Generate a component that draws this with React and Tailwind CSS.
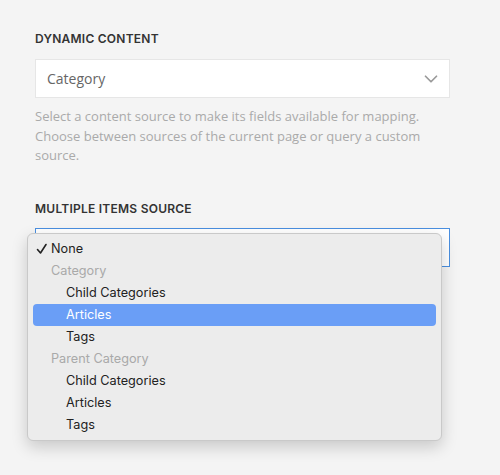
import { ChevronDown } from 'lucide-react';

const sources = [
  { label: 'None', checked: true },
  { label: 'Category', group: true },
  { label: 'Child Categories' },
  { label: 'Articles', active: true },
  { label: 'Tags' },
  { label: 'Parent Category', group: true },
  { label: 'Child Categories' },
  { label: 'Articles' },
  { label: 'Tags' },
];

function FieldLabel({ children }) {
  return (
    <div className="text-[12px] leading-4 font-semibold uppercase tracking-[0.02em] text-[#333] font-['Inter',sans-serif]">
      {children}
    </div>
  );
}

function SourceMenu() {
  return (
    <div className="absolute left-[-8px] top-[5px] w-[415px] rounded-[6px] border border-[#c9c9c9] bg-[#ececec] pt-[4px] pb-[4px] px-[5px] shadow-[0_6px_16px_rgba(0,0,0,0.18)] font-['Inter',sans-serif] text-[12.7px]">
      {sources.map((item, i) => {
        let cls = 'h-[22px] flex items-center rounded-[4px] ';
        if (item.active) cls += 'bg-[#6a9ef6] text-white pl-[33px]';
        else if (item.group) cls += 'text-[#a9a9a9] pl-[18px]';
        else if (item.checked) cls += 'text-[#222] pl-[3px]';
        else cls += 'text-[#222] pl-[33px]';
        return (
          <div key={i} className={cls}>
            {item.checked && (
              <svg width="15" height="12" viewBox="0 0 15 12" className="shrink-0">
                <path d="M1.5 6.5 L4.5 10 L10 1.5" fill="none" stroke="#222" strokeWidth="1.6" strokeLinecap="round" strokeLinejoin="round" />
              </svg>
            )}
            {item.label}
          </div>
        );
      })}
    </div>
  );
}

export default function App() {
  return (
    <div className="min-h-screen bg-[#f4f4f4] pt-[31px] pl-[35px]">
      <div className="w-[415px]">
        <FieldLabel>Dynamic Content</FieldLabel>
        <div className="mt-3 h-[39px] flex items-center justify-between border border-[#e6e6e6] bg-white pl-[11px] pr-[7px]">
          <span className="text-[14px] text-[#666] font-['Open_Sans',sans-serif]">Category</span>
          <ChevronDown size={22} strokeWidth={1.9} className="text-[#9a9a9a]" />
        </div>
        <p className="mt-[9px] text-[13px] leading-[19.5px] text-[#aaa] font-['Open_Sans',sans-serif]">
          Select a content source to make its fields available for mapping.
          Choose between sources of the current page or query a custom
          source.
        </p>

        <div className="mt-[35px]">
          <FieldLabel>Multiple Items Source</FieldLabel>
        </div>
        <div className="relative mt-[11px]">
          <div className="h-[39px] border border-[#4a8fe0] bg-white" />
          <SourceMenu />
        </div>
      </div>
    </div>
  );
}
